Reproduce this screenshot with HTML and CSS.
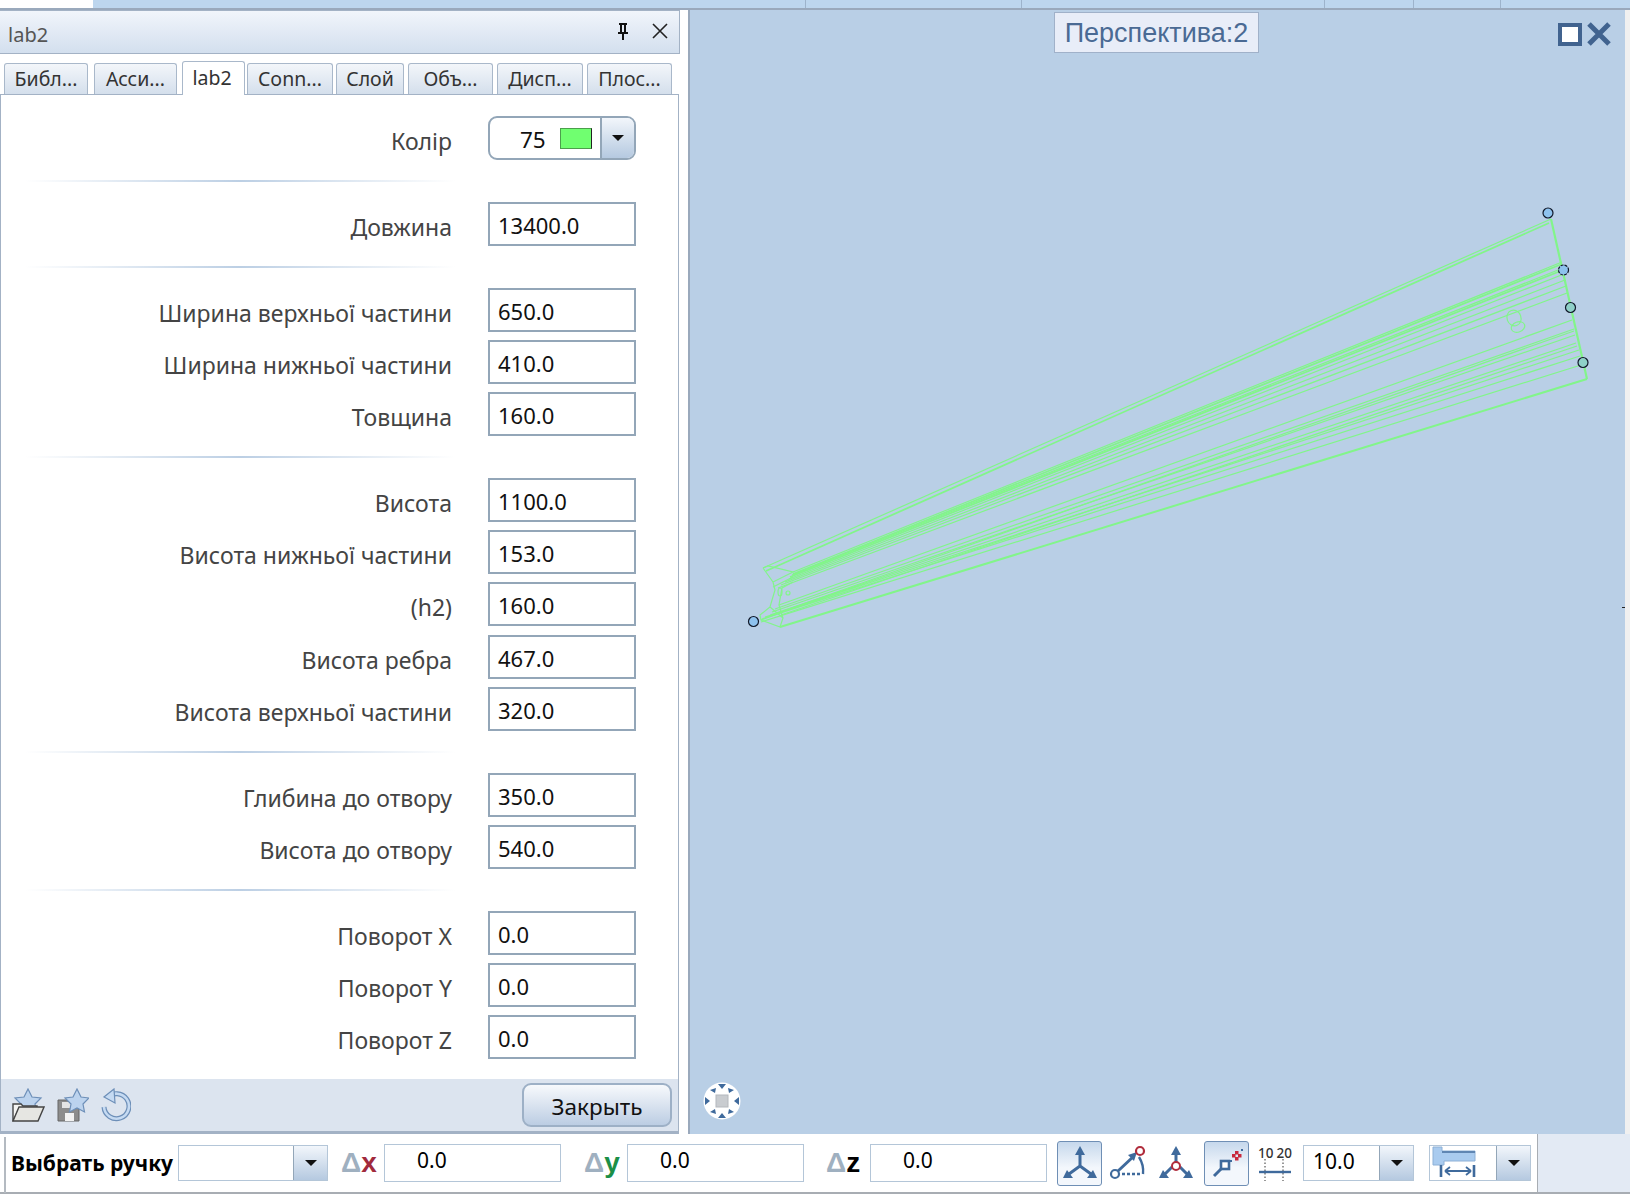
FILE: index.html
```html
<!DOCTYPE html>
<html lang="en">
<head>
    <meta charset="UTF-8">
    <meta name="viewport" content="width=device-width, initial-scale=1.0">
    <title>lab2</title>
    <link rel="stylesheet" href="styles.css">
</head>
<body>

    <div class="top-strip">
        <div class="top-white"></div>
        <div class="top-cell c1"></div>
        <div class="top-cell c2"></div>
        <div class="top-cell c3"></div>
        <div class="top-cell c4"></div>
        <div class="top-cell c5"></div>
    </div>

    <div class="main">
        <div class="panel">
            <div class="title-bar">
                <span class="title-text">lab2</span>
                <svg class="pin" width="16" height="18" viewBox="0 0 16 18">
                    <path d="M4 1h8v2h-1v7h2v2H3v-2h2V3H4z M7 3v7h2V3z" fill="#111" fill-rule="evenodd"/>
                    <rect x="7" y="12" width="2" height="6" fill="#111"/>
                </svg>
                <svg class="close" width="16" height="16" viewBox="0 0 16 16">
                    <path d="M1 1l14 14M15 1L1 15" stroke="#222" stroke-width="1.6" fill="none"/>
                </svg>
            </div>

            <div class="tabs">
                <div class="tab t1">Библ...</div>
                <div class="tab t2">Асси...</div>
                <div class="tab tab-active">lab2</div>
                <div class="tab t4">Conn...</div>
                <div class="tab t5">Слой</div>
                <div class="tab t6">Объ...</div>
                <div class="tab t7">Дисп...</div>
                <div class="tab t8">Плос...</div>
            </div>

            <div class="panel-body">
                <div class="form">
                    <div class="row">
                        <div class="label">Колір</div>
                        <div class="color-combo">
                            <span class="color-num">75</span>
                            <span class="swatch"></span>
                            <span class="combo-btn color-btn"><i class="arrow"></i></span>
                        </div>
                    </div>
                    <div class="divider"></div>
                    <div class="row">
                        <div class="label">Довжина</div>
                        <div class="field">13400.0</div>
                    </div>
                    <div class="divider"></div>
                    <div class="row">
                        <div class="label">Ширина верхньої частини</div>
                        <div class="field">650.0</div>
                    </div>
                    <div class="row">
                        <div class="label">Ширина нижньої частини</div>
                        <div class="field">410.0</div>
                    </div>
                    <div class="row">
                        <div class="label">Товщина</div>
                        <div class="field">160.0</div>
                    </div>
                    <div class="divider"></div>
                    <div class="row">
                        <div class="label">Висота</div>
                        <div class="field">1100.0</div>
                    </div>
                    <div class="row">
                        <div class="label">Висота нижньої частини</div>
                        <div class="field">153.0</div>
                    </div>
                    <div class="row row-extra">
                        <div class="label">(h2)</div>
                        <div class="field">160.0</div>
                    </div>
                    <div class="row">
                        <div class="label">Висота ребра</div>
                        <div class="field">467.0</div>
                    </div>
                    <div class="row">
                        <div class="label">Висота верхньої частини</div>
                        <div class="field">320.0</div>
                    </div>
                    <div class="divider"></div>
                    <div class="row">
                        <div class="label">Глибина до отвору</div>
                        <div class="field">350.0</div>
                    </div>
                    <div class="row">
                        <div class="label">Висота до отвору</div>
                        <div class="field">540.0</div>
                    </div>
                    <div class="divider"></div>
                    <div class="row">
                        <div class="label">Поворот X</div>
                        <div class="field">0.0</div>
                    </div>
                    <div class="row">
                        <div class="label">Поворот Y</div>
                        <div class="field">0.0</div>
                    </div>
                    <div class="row">
                        <div class="label">Поворот Z</div>
                        <div class="field">0.0</div>
                    </div>
                </div>

                <div class="panel-footer">
                    <svg class="foot-icon" width="34" height="34" viewBox="0 0 34 34">
                        <path d="M17 1l4 8 9 1-6 6 1.5 8-8.500-4-8.500 4L10 16 4 10l9-1z" fill="#bcd3ee" stroke="#6d8fb8" stroke-width="1.200"/>
                        <path d="M2 16h8l2 2h14v3H8l-6 12z" fill="#f4f4f2" stroke="#444" stroke-width="1.400"/>
                        <path d="M8 19h25l-6 14H2z" fill="#e6e6e2" stroke="#444" stroke-width="1.400"/>
                    </svg>
                    <svg class="foot-icon icon-save" width="32" height="34" viewBox="0 0 32 34">
                        <path d="M1 12h16l5 5v16H1z" fill="#8c8c8c" stroke="#666"/>
                        <rect x="5" y="14" width="10" height="6" fill="#e4e4e4"/>
                        <rect x="8" y="25" width="9" height="8" fill="#f2f2f2"/>
                        <path d="M20 1l4 8 8 1-6 6 1.500 8-7.500-4-7.500 4L14 16 8 10l8-1z" fill="#bcd3ee" stroke="#6d8fb8" stroke-width="1.200"/>
                    </svg>
                    <svg class="foot-icon icon-undo" width="30" height="34" viewBox="0 0 30 34">
                        <path d="M6 10a12.500 12.500 0 1 1-3 9" fill="none" stroke="#6d8fb8" stroke-width="5"/>
                        <path d="M6 10a12.500 12.500 0 1 1-3 9" fill="none" stroke="#c5daf2" stroke-width="2.600"/>
                        <path d="M13 1L3 9l11 6z" fill="#c5daf2" stroke="#6d8fb8" stroke-width="1.200"/>
                    </svg>
                    <button class="close-btn">Закрыть</button>
                </div>
            </div>
        </div>

        <div class="viewport">
            <svg class="wire" width="937" height="1124" viewBox="688 10 937 1124">
                <g fill="none" stroke="#82f58a" stroke-width="1.200">
                    <path d="M763 568L1551 219"/>
                    <path d="M766 571L1549 223" stroke-width="1.800"/>
                    <path d="M1551 219L1587 379" stroke-width="2.200"/>
                    <path d="M780 627L1587 379" stroke-width="2"/>
                    <!-- upper bundle -->
                    <path d="M793 572L1562 262M792 575L1563 268M789 579L1564 274M785 582L1565 280M781 585L1566 286M778 588L1567 293"/>
                    <path d="M793 574L1562 264M790 577L1563 270" stroke-width="1.800"/>
                    <!-- lower bundle -->
                    <path d="M779 605L1572 320M775 609L1574 329M772 612L1575 335M770 615L1576 343M765 617L1579 350M762 619L1580 356M761 622L1581 365"/>
                    <path d="M783 611L1574 331M781 615L1577 346"/>
                    <!-- near end profile -->
                    <path d="M763 568L768 566L793 572L773 582L775 590L770 607L760 615L761 620L780 627L783 618L779 605L782 588L793 582M763 568L773 582M773 587L793 577M770 607L783 618M761 620L783 612"/>
                    <ellipse cx="780" cy="592" rx="2" ry="4"/>
                    <ellipse cx="788" cy="593" rx="2" ry="2"/>
                    <!-- holes far end -->
                    <ellipse cx="1514" cy="318" rx="7" ry="8" transform="rotate(-20 1514 318)"/>
                    <ellipse cx="1518" cy="327" rx="7" ry="5" transform="rotate(-20 1518 327)"/>
                </g>
                <g fill="#8ec2ee" stroke="#101828" stroke-width="1.200">
                    <circle cx="1548" cy="213" r="5"/>
                    <circle cx="1563.500" cy="270" r="5" stroke-dasharray="3 1"/>
                    <circle cx="1570.500" cy="307.500" r="5" fill="#8fd0c8"/>
                    <circle cx="1583" cy="362.500" r="5" fill="#8fd0c8"/>
                    <circle cx="753.500" cy="621.500" r="5"/>
                </g>
            </svg>

            <div class="persp-label">Перспектива:2</div>
            <div class="win-icons">
                <span class="win-square"></span>
                <svg width="26" height="26" viewBox="0 0 26 26">
                    <path d="M3 3l20 20M23 3L3 23" stroke="#41638f" stroke-width="5" fill="none"/>
                </svg>
            </div>
            <svg class="nav-icon" width="38" height="40" viewBox="0 0 38 40">
                <circle cx="19" cy="20" r="18.500" fill="#fff"/>
                <rect x="13" y="14" width="12" height="12" fill="#c9ccd0" stroke="#b4b8bd"/>
                <g fill="#3f6a9c">
                    <path d="M15 3h8l-4 5zM15 37h8l-4-5zM2 16v8l5-4zM36 16v8l-5-4z"/>
                    <path d="M7 9l6-2-1 5zM31 9l-6-2 1 5zM7 31l6 2-1-5zM31 31l-6 2 1-5z"/>
                </g>
            </svg>
            <span class="edge-tick"></span>
        </div>
        <div class="side-gap"></div>
    </div>

    <div class="toolbar">
        <div class="grip"></div>
        <span class="handle-label">Выбрать ручку</span>
        <div class="combo combo-handle">
            <span class="combo-text"></span>
            <span class="combo-btn"><i class="arrow"></i></span>
        </div>
        <span class="delta delta-x">Δ<b>x</b></span>
        <div class="coord">0.0</div>
        <span class="delta delta-y">Δ<b>y</b></span>
        <div class="coord">0.0</div>
        <span class="delta delta-z">Δ<b>z</b></span>
        <div class="coord">0.0</div>

        <div class="tool tool-on tool-first">
            <svg width="36" height="36" viewBox="0 0 36 36">
                <g stroke="#3f6a9c" stroke-width="3" fill="none">
                    <path d="M18 8v13L7 29M18 21l11 8"/>
                </g>
                <g fill="#3f6a9c">
                    <path d="M18 1l-5 9h10z"/>
                    <path d="M1 33h10L5 25z"/>
                    <path d="M35 33H25l6-8z"/>
                </g>
            </svg>
        </div>
        <div class="tool tool-plain tool-second">
            <svg width="40" height="36" viewBox="0 0 40 36">
                <path d="M10 26L26 11" stroke="#3f6a9c" stroke-width="3" fill="none"/>
                <path d="M29 7l-9 3 6 6z" fill="#3f6a9c"/>
                <circle cx="32" cy="6" r="4" fill="#fff" stroke="#b02c3c" stroke-width="2.200"/>
                <circle cx="7" cy="29" r="4" fill="#fff" stroke="#3f6a9c" stroke-width="2.200"/>
                <path d="M14 29h18" stroke="#3f6a9c" stroke-width="2.400" stroke-dasharray="3 2"/>
                <path d="M31 12q5 8 4 17" stroke="#3f6a9c" stroke-width="2.400" fill="none"/>
            </svg>
        </div>
        <div class="tool tool-plain tool-third">
            <svg width="36" height="36" viewBox="0 0 36 36">
                <path d="M18 8v10M14 22L7 29M22 22l7 7" stroke="#3f6a9c" stroke-width="3" fill="none"/>
                <path d="M18 1l-5 9h10z" fill="#3f6a9c"/>
                <path d="M1 33h10L5 25z" fill="#3f6a9c"/>
                <path d="M35 33H25l6-8z" fill="#3f6a9c"/>
                <circle cx="18" cy="21" r="4" fill="#fff" stroke="#b02c3c" stroke-width="2"/>
            </svg>
        </div>
        <div class="tool tool-on tool-fourth">
            <svg width="36" height="36" viewBox="0 0 36 36">
                <path d="M5 31l8-8" stroke="#3f6a9c" stroke-width="3"/>
                <rect x="12" y="16" width="8" height="8" fill="#fff" stroke="#3f6a9c" stroke-width="2.600"/>
                <g fill="#c8283c">
                    <rect x="23" y="9" width="3.500" height="3.500"/>
                    <rect x="26" y="6" width="3.500" height="3.500"/>
                    <rect x="26" y="12" width="3.500" height="3.500"/>
                    <rect x="29" y="9" width="3.500" height="3.500"/>
                </g>
                <rect x="21" y="15" width="2" height="2" fill="#3f6a9c"/>
                <rect x="32" y="4" width="2" height="2" fill="#3f6a9c"/>
            </svg>
        </div>
        <div class="scale-icon">
            <div class="scale-nums"><span>10</span><span>20</span></div>
            <svg width="34" height="22" viewBox="0 0 34 22">
                <path d="M7 0v22M25 0v22" stroke="#333" stroke-dasharray="1.500 2"/>
                <path d="M1 13h32" stroke="#3f6a9c" stroke-width="2.400"/>
            </svg>
        </div>
        <div class="combo combo-step">
            <span class="combo-text">10.0</span>
            <span class="combo-btn"><i class="arrow"></i></span>
        </div>
        <div class="combo combo-dim">
            <span class="combo-text">
                <svg width="44" height="32" viewBox="0 0 44 32">
                    <path d="M1 1h9v4h33v10H12v4H1z" fill="#a9cbef" stroke="#8db0d6"/>
                    <path d="M10 5h33v2H10z" fill="#5f86b3"/>
                    <path d="M9 19v12M42 19v12" stroke="#3f6a9c" stroke-width="2.600"/>
                    <path d="M13 25h26M13 25l5-4M13 25l5 4M39 25l-5-4M39 25l-5 4" stroke="#3f6a9c" stroke-width="1.800" fill="none"/>
                </svg>
            </span>
            <span class="combo-btn"><i class="arrow"></i></span>
        </div>
        <div class="toolbar-rest"></div>
    </div>

</body>
</html>
```

FILE: styles.css
```css
* {
    margin: 0;
    padding: 0;
    box-sizing: border-box;
}
html, body {
    width: 1630px;
    height: 1196px;
    overflow: hidden;
}
body {
    font-family: "Noto Sans", Arial, sans-serif;
    background-color: #fff;
    color: #000;
}

/* top strip */
.top-strip {
    display: flex;
    height: 10px;
    background-color: #bdd6ee;
    border-bottom: 2px solid #9aa9bc;
}
.top-white {
    width: 93px;
    background-color: #fff;
}
.top-cell {
    border-right: 1px solid #9db3cb;
}
.c1 { width: 713px; }
.c2 { width: 216px; }
.c3 { width: 303px; }
.c4 { width: 89px; }
.c5 { width: 87px; }

.main {
    display: flex;
    height: 1124px;
}

/* left panel */
.panel {
    width: 680px;
    display: flex;
    flex-direction: column;
    background-color: #fff;
}
.side-gap {
    flex: 1;
    background-color: #f0f0f0;
}
.title-bar {
    height: 44px;
    display: flex;
    align-items: center;
    background: linear-gradient(#f1f5fb, #d3dfee);
    border: 1px solid #a3b2c5;
    border-left: none;
    padding: 0 11px 0 8px;
}
.title-text {
    flex: 1;
    font-size: 20px;
    color: #555;
    padding-top: 4px;
}
.pin {
    margin: 0 21px 2px 0;
}
.close {
    margin-bottom: 3px;
}
.tabs {
    height: 41px;
    display: flex;
    align-items: flex-end;
    gap: 4px;
    padding-left: 4px;
    border-bottom: 1px solid #a3b2c5;
    margin-right: 1px;
}
.tab {
    height: 31px;
    line-height: 30px;
    text-align: center;
    font-size: 19.500px;
    color: #333;
    background: linear-gradient(#f3f6fa, #d4dfec);
    border: 1px solid #a9b8ca;
    border-bottom: none;
    border-radius: 3px 3px 0 0;
}
.t1 { width: 84px; }
.t2 { width: 83px; margin-left: 2px; }
.t4 { width: 86px; }
.t5 { width: 68px; margin-left: -1px; }
.t6 { width: 85px; }
.t7 { width: 86px; }
.t8 { width: 85px; }
.tab-active {
    width: 63px;
    height: 34px;
    line-height: 31px;
    padding-right: 3px;
    margin: 0 -2px -1px 1px;
    background: #fff;
    position: relative;
}
.panel-body {
    flex: 1;
    display: flex;
    flex-direction: column;
    border: 1px solid #a3b2c5;
    border-top: none;
    border-bottom-width: 3px;
    margin-right: 1px;
}
.form {
    flex: 1;
    padding-top: 21px;
    display: flex;
    flex-direction: column;
    gap: 8px;
}
.row {
    display: flex;
    align-items: center;
    height: 44px;
}
.row-extra {
    margin-bottom: 1px;
}
.label {
    width: 451px;
    text-align: right;
    font-size: 23px;
    color: #444;
    padding-top: 6px;
}
.field {
    width: 148px;
    height: 44px;
    margin-left: 36px;
    border: 2px solid #93a6b8;
    padding-left: 8px;
    font-size: 22px;
    line-height: 42px;
    color: #111;
}
.divider {
    height: 2px;
    width: 430px;
    margin: 12px 0 12px 24px;
    background: linear-gradient(to right, rgba(190, 208, 228, 0), #bccfe4 50%, rgba(190, 208, 228, 0));
}
.color-combo {
    width: 148px;
    height: 44px;
    margin-left: 36px;
    display: flex;
    align-items: center;
    border: 2px solid #93a6b8;
    border-radius: 9px;
    overflow: hidden;
}
.color-num {
    width: 64px;
    padding: 3px 0 0 30px;
    font-size: 22.500px;
    color: #111;
}
.swatch {
    width: 32px;
    height: 21px;
    margin-left: 6px;
    background-color: #70ff70;
    border: 1px solid #4c9f4c;
    border-right-color: #222;
}
.color-btn {
    margin-left: auto;
}
.combo-btn {
    width: 34px;
    height: 100%;
    display: flex;
    align-items: center;
    justify-content: center;
    background: linear-gradient(#f2f6fb, #b5c9e0);
    border-left: 2px solid #93a6b8;
}
.arrow {
    width: 0;
    height: 0;
    border-left: 6px solid transparent;
    border-right: 6px solid transparent;
    border-top: 6px solid #111;
}
.panel-footer {
    height: 52px;
    display: flex;
    align-items: center;
    background-color: #dce4ef;
    padding: 0 6px 0 10px;
}
.foot-icon {
    flex: none;
}
.icon-save {
    margin-left: 12px;
}
.icon-undo {
    margin-left: 12px;
}
.close-btn {
    margin-left: auto;
    width: 150px;
    height: 44px;
    font-family: inherit;
    font-size: 22.500px;
    padding-top: 3px;
    color: #111;
    background: linear-gradient(#f7f9fc, #bccde3);
    border: 2px solid #9db0c6;
    border-radius: 9px;
}

/* 3d viewport */
.viewport {
    width: 937px;
    margin-left: 8px;
    background-color: #b9cfe6;
    border-left: 2px solid #9aa9bc;
    position: relative;
}
.wire {
    position: absolute;
    top: 0;
    left: -2px;
}
.persp-label {
    position: absolute;
    top: 2px;
    left: 364px;
    width: 205px;
    height: 41px;
    background-color: #e8edf8;
    border: 1px solid #a0b1c9;
    font-family: "Liberation Sans", Arial, sans-serif;
    font-size: 27px;
    line-height: 40px;
    text-align: center;
    color: #4a6a94;
}
.win-icons {
    position: absolute;
    top: 11px;
    left: 868px;
    display: flex;
    align-items: center;
    gap: 4px;
}
.win-square {
    width: 24px;
    height: 23px;
    background-color: #fff;
    border: 4px solid #41638f;
}
.nav-icon {
    position: absolute;
    left: 13px;
    top: 1071px;
}
.edge-tick {
    position: absolute;
    right: 0;
    top: 597px;
    width: 3px;
    height: 1px;
    background-color: #222;
}

/* bottom toolbar */
.toolbar {
    height: 60px;
    display: flex;
    align-items: center;
    border-bottom: 2px solid #a8adb3;
    position: relative;
}
.grip {
    width: 2px;
    height: 56px;
    margin: 4px 0 0 4px;
    background-color: #b4bac1;
}
.handle-label {
    width: 172px;
    padding-left: 5px;
    font-size: 21px;
    font-weight: bold;
    white-space: nowrap;
}
.combo {
    height: 36px;
    display: flex;
    border: 1px solid #b4c6d8;
}
.combo-handle {
    width: 150px;
}
.combo-text {
    flex: 1;
    font-size: 21px;
    line-height: 30px;
    padding-left: 9px;
}
.combo .combo-btn {
    border-left-width: 1px;
    width: 34px;
    flex: none;
}
.delta {
    font-family: "Liberation Sans", Arial, sans-serif;
    font-size: 28px;
    font-weight: bold;
    color: #9fb0c0;
    white-space: nowrap;
}
.delta b {
    font-size: 28px;
}
.delta-x { width: 43px; margin-left: 13px; }
.delta-y { width: 43px; margin-left: 23px; }
.delta-z { width: 44px; margin-left: 22px; }
.delta-x b { color: #a12a3c; }
.delta-y b { color: #1b8f47; }
.delta-z b { color: #000; }
.coord {
    width: 177px;
    height: 38px;
    border: 1px solid #b4c6d8;
    padding-left: 32px;
    font-size: 21px;
    line-height: 30px;
}
.tool {
    height: 45px;
    display: flex;
    align-items: center;
    justify-content: center;
}
.tool-on {
    width: 45px;
    background: linear-gradient(#c6d8ec, #f3f7fc 60%);
    border: 1px solid #6f8fb5;
    border-radius: 3px;
}
.tool-first { margin-left: 10px; }
.tool-second { width: 42px; margin-left: 5px; }
.tool-third { width: 38px; margin-left: 8px; }
.tool-fourth { margin-left: 9px; }
.scale-icon {
    width: 36px;
    margin-left: 8px;
    display: flex;
    flex-direction: column;
    align-items: center;
}
.scale-nums {
    display: flex;
    gap: 3px;
    font-size: 13.500px;
    font-weight: 500;
    line-height: 15px;
    color: #333;
}
.scale-icon svg {
    margin-top: -2px;
}
.combo-step {
    width: 111px;
    margin-left: 10px;
}
.combo-dim {
    width: 102px;
    margin-left: 15px;
}
.combo-dim .combo-text {
    padding-left: 2px;
    line-height: 0;
}
.toolbar-rest {
    flex: 1;
    height: 58px;
    margin-left: 6px;
    background-color: #e3eaf4;
    border-left: 1px solid #a8adb3;
}
```
